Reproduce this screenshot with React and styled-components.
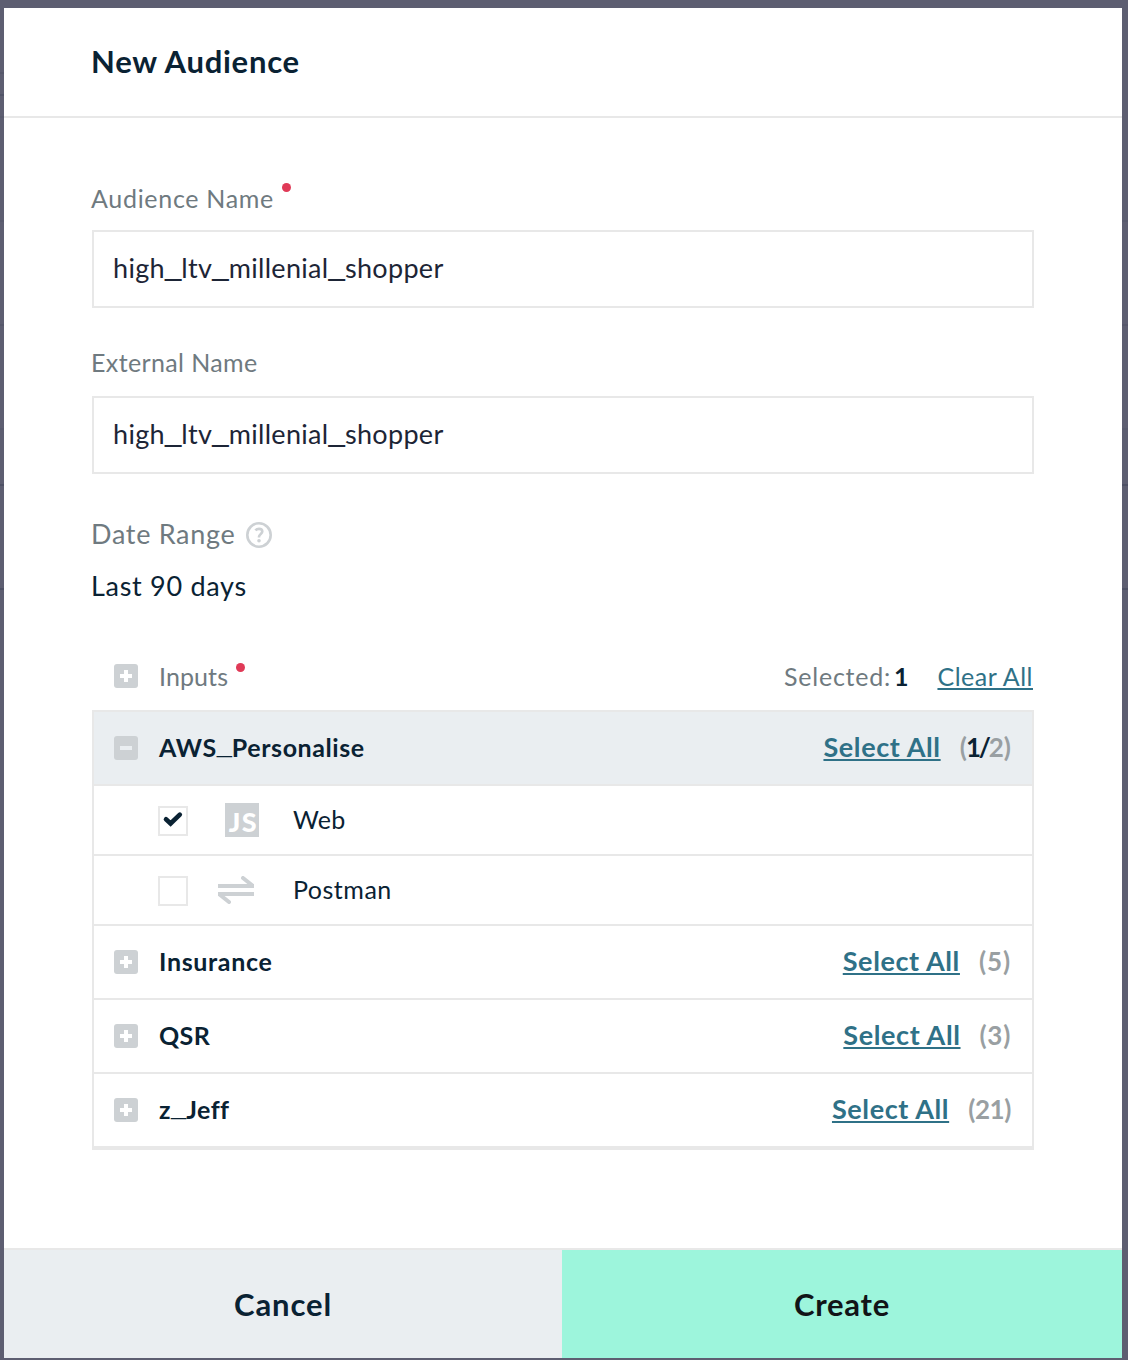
import React from "react";
import styled, { createGlobalStyle } from "styled-components";

const ink = "#0a2233";
const muted = "#6f7a80";
const line = "#e8e8e8";
const icon = "#cdd1d4";
const teal = "#2f7187";
const count = "#999fa2";

const Global = createGlobalStyle`
  * { box-sizing: border-box; }
  body { margin: 0; background: #5d5d70; font-family: Lato, "Open Sans", sans-serif; }
`;

const rule = (y, color) => `linear-gradient(${color}, ${color}) 0 ${y}px / 100% 2px no-repeat`;

const Backdrop = styled.main`
  height: 1360px;
  padding: 8px 6px 2px 4px;
  background: ${[
    rule(220, "#585a6d"),
    rule(324, "#56586b"),
    rule(428, "#585a6d"),
    rule(484, "#4e5165"),
    rule(588, "#4e5165"),
  ].join(", ")},
    linear-gradient(#56586b, #56586b) 0 72px / 4px 2px no-repeat,
    linear-gradient(#515468, #515468) 0 94px / 4px 2px no-repeat,
    linear-gradient(#585a6d, #585a6d) 0 116px / 4px 2px no-repeat,
    #5d5e71;
`;

const Modal = styled.section`
  display: flex;
  flex-direction: column;
  height: 1350px;
  background: #fff;
`;

const Header = styled.header`
  display: flex;
  align-items: center;
  height: 110px;
  padding: 0 87px 2px;
  border-bottom: 2px solid ${line};
`;

const TextBase = styled.span`
  font-size: ${(p) => p.$size || 25}px;
  font-weight: ${(p) => p.$weight || 400};
  letter-spacing: ${(p) => p.$track || 0}px;
  color: ${(p) => p.$color || ink};
  line-height: 30px;
  white-space: pre;
`;

const Underscore = styled.span`
  font-family: "Liberation Sans", Arial, sans-serif;
  font-size: 1.09em;
  letter-spacing: 0;
  line-height: 0;
  vertical-align: 3px;
`;

const Text = ({ children, ...rest }) => (
  <TextBase {...rest}>
    {String(children)
      .split(/(_)/)
      .map((part, i) => (part === "_" ? <Underscore key={i}>_</Underscore> : part))}
  </TextBase>
);

const Body = styled.div`
  flex: 1;
  padding: 65px 88px 0;
`;

const Label = styled.div`
  display: flex;
  align-items: flex-start;
  height: ${(p) => p.$h}px;
  margin-left: -1px;
`;

const Dot = styled.i`
  width: 9px;
  height: 9px;
  margin-left: 8px;
  border-radius: 50%;
  background: #e03a57;
`;

const Input = styled.div`
  display: flex;
  align-items: center;
  height: 78px;
  margin-bottom: ${(p) => p.$after}px;
  padding: 0 19px 2px;
  border: 2px solid ${line};
`;

const HelpIcon = styled.svg`
  margin: 3px 0 0 11px;
`;

const InputsHead = styled.div`
  display: flex;
  align-items: center;
  height: 48px;
  margin: 29px 0 10px;
  padding-left: 22px;
`;

const HeadLabel = styled.div`
  display: flex;
  flex: 1;
  margin-left: 21px;
`;

const HeadDot = styled(Dot)`
  margin: 2px 0 0 8px;
`;

const Summary = styled.div`
  display: flex;
  gap: 29px;
  padding-right: 1px;
`;

const Selected = styled.div`
  display: flex;
  gap: 3px;
`;

const Table = styled.div`
  border: 2px solid ${line};
`;

const Row = styled.div`
  display: flex;
  align-items: center;
  height: 74px;
  padding: 0 21px 0 20px;
  border-bottom: 2px solid ${line};
  background: ${(p) => (p.$open ? "#eaeef1" : "#fff")};
`;

const ChildRow = styled(Row)`
  height: 70px;
  padding-left: 64px;
`;

const Name = styled.div`
  display: flex;
  flex: 1;
  margin-left: ${(p) => (p.$child ? 1 : 21)}px;
  padding-bottom: 3px;
`;

const Actions = styled.div`
  display: flex;
  gap: 19px;
  padding-bottom: 3px;
`;

const Link = styled(TextBase).attrs({ as: "a" })`
  color: ${teal};
  text-decoration: underline;
  text-decoration-thickness: 2px;
  text-underline-offset: 2px;
  text-decoration-skip-ink: none;
`;

const Count = styled.div`
  display: flex;
`;

const Check = styled.div`
  width: 30px;
  height: 30px;
  margin-top: 2px;
  border: 2px solid ${line};
`;

const Tick = styled.svg`
  display: block;
`;

const IconCell = styled.div`
  display: flex;
  width: 104px;
  padding-left: ${(p) => p.$inset}px;
`;

const JsBadge = styled.div`
  display: flex;
  align-items: flex-end;
  justify-content: flex-end;
  width: 34px;
  height: 34px;
  padding-right: 1px;
  background: ${icon};
  color: #fff;
  font-size: 27px;
  font-weight: 900;
  letter-spacing: 1.4px;
  line-height: 31px;
`;

const Footer = styled.footer`
  display: grid;
  grid-template-columns: 558px 560px;
  height: 110px;
  border-top: 2px solid ${line};
`;

const Button = styled.button`
  padding: 0;
  border: 0;
  background: ${(p) => p.$bg};
  font-family: inherit;
`;

const Toggle = ({ minus }) => (
  <svg width="24" height="24" viewBox="0 0 24 24">
    <rect width="24" height="24" rx="3" fill={icon} />
    <path
      d={minus ? "M6 12H18" : "M6 12H18M12 6V18"}
      stroke={minus ? "#eaeef1" : "#fff"}
      strokeWidth="4"
    />
  </svg>
);

const Help = () => (
  <HelpIcon width="26" height="26" viewBox="0 0 26 26" fill="none" stroke={icon} strokeWidth="2.6">
    <circle cx="13" cy="13" r="11.7" />
    <path d="M9.4 8.4C10.4 7.3 11.7 6.9 13 6.9C15 6.9 16.3 8 16.3 9.6C16.3 11.9 13 12 13 14.8V15.4" />
    <circle cx="13" cy="18.7" r="1.8" fill={icon} stroke="none" />
  </HelpIcon>
);

const Arrows = () => (
  <svg width="36" height="28" viewBox="0 0 36 28" fill="none" stroke={icon} strokeWidth="4">
    <path d="M0 10H36M0 18H36" />
    <path d="M25 2L35 10M11 26L1 18" strokeLinecap="round" />
  </svg>
);

const Group = ({ name, track, open, children }) => (
  <Row $open={open}>
    <Toggle minus={open} />
    <Name><Text $weight={700} $track={track}>{name}</Text></Name>
    <Actions>
      <Link $size={27} $weight={700} $track={0.6}>Select All</Link>
      <Count>{children}</Count>
    </Actions>
  </Row>
);

const Tally = (props) => <Text $size={26} $weight={700} $color={count} {...props} />;

const Source = ({ name, checked, inset, glyph, track }) => (
  <ChildRow>
    <Check>
      {checked && (
        <Tick width="26" height="26" viewBox="0 0 26 26" fill="none">
          <path d="M6 11.3L10.6 15.5L19.8 6.7" stroke={ink} strokeWidth="4.6" strokeLinecap="round" />
        </Tick>
      )}
    </Check>
    <IconCell $inset={inset}>{glyph}</IconCell>
    <Name $child><Text $track={track}>{name}</Text></Name>
  </ChildRow>
);

export default function App() {
  return (
    <Backdrop>
      <Global />
      <Modal>
        <Header><Text $size={31} $weight={700} $track={0.75}>New Audience</Text></Header>
        <Body>
          <Label $h={47}>
            <Text $color={muted} $track={0.7}>Audience Name</Text>
            <Dot />
          </Label>
          <Input $after={39}><Text $size={27} $track={0.32} $color="#1d2536">high_ltv_millenial_shopper</Text></Input>
          <Label $h={49}><Text $color={muted} $track={0.38}>External Name</Text></Label>
          <Input $after={45}><Text $size={27} $track={0.32} $color="#1d2536">high_ltv_millenial_shopper</Text></Input>
          <Label $h={52}>
            <Text $size={27} $color={muted} $track={0.7}>Date Range</Text>
            <Help />
          </Label>
          <Label $h={52}><Text $size={27} $track={0.7}>Last 90 days</Text></Label>
          <InputsHead>
            <Toggle />
            <HeadLabel>
              <Text $color={muted} $track={0.1}>Inputs</Text>
              <HeadDot />
            </HeadLabel>
            <Summary>
              <Selected>
                <Text $color={muted} $track={0.75}>Selected:</Text>
                <Text $weight={700}>1</Text>
              </Selected>
              <Link $track={0.5}>Clear All</Link>
            </Summary>
          </InputsHead>
          <Table>
            <Group name="AWS_Personalise" track={0.57} open>
              <Tally $track={-0.8}>(</Tally>
              <Tally $track={-2.2} $color={ink}>1/</Tally>
              <Tally>2)</Tally>
            </Group>
            <Source name="Web" track={0.3} checked inset={37} glyph={<JsBadge>JS</JsBadge>} />
            <Source name="Postman" track={0.5} inset={30} glyph={<Arrows />} />
            <Group name="Insurance" track={0.65}><Tally $track={0.9}>(5)</Tally></Group>
            <Group name="QSR" track={0.4}><Tally $track={0.7}>(3)</Tally></Group>
            <Group name="z_Jeff" track={0.5}><Tally $track={-0.4}>(21)</Tally></Group>
          </Table>
        </Body>
        <Footer>
          <Button $bg="#eaeef1"><Text $size={31} $weight={700} $track={0.9}>Cancel</Text></Button>
          <Button $bg="#9df5dc"><Text $size={31} $weight={700} $track={0.75} $color="#111417">Create</Text></Button>
        </Footer>
      </Modal>
    </Backdrop>
  );
}
